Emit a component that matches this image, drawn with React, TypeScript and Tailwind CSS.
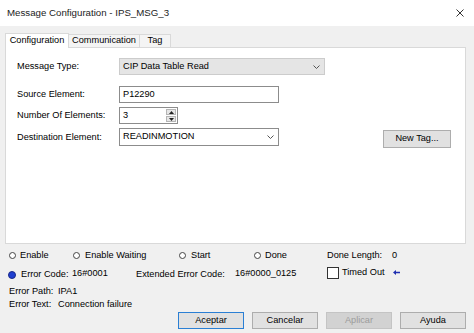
import React from 'react'

const Radio: React.FC<{ on?: boolean }> = ({ on }) =>
  on ? (
    <span className="w-[8px] h-[8px] rounded-full bg-[#1f3fd0] border border-[#1a2a8a] shrink-0" />
  ) : (
    <span className="w-[7px] h-[7px] rounded-full bg-white border border-[#444] shrink-0" />
  )

const Chevron: React.FC = () => (
  <svg width="7" height="4" viewBox="0 0 7 4" className="shrink-0">
    <path d="M0.5 0.5 L3.5 3.5 L6.5 0.5" fill="none" stroke="#555" strokeWidth="1" />
  </svg>
)

const Btn: React.FC<{ label: string; primary?: boolean; disabled?: boolean }> = ({ label, primary, disabled }) => (
  <div
    className={`w-[66px] h-[17px] flex items-center justify-center border ${
      primary
        ? 'border-[#2a7fd4] bg-[#e1e1e1] text-black'
        : disabled
        ? 'border-[#c4c4c4] bg-[#d2d2d2] text-[#9c9c9c]'
        : 'border-[#adadad] bg-[#e1e1e1] text-black'
    }`}
  >
    {label}
  </div>
)

const App: React.FC = () => {
  return (
    <div className="w-[474px] h-[333px] bg-[#f0f0f0] flex flex-col font-['Liberation_Sans',Arial,sans-serif] text-[9.2px] text-black overflow-hidden">
      {/* title bar */}
      <div className="h-[26px] bg-white flex items-center justify-between pl-[7px] pr-[10px] shrink-0">
        <span className="text-[9.7px] text-[#222]">Message Configuration - IPS_MSG_3</span>
        <svg width="8" height="8" viewBox="0 0 8 8">
          <path d="M0.5 0.5 L7.5 7.5 M7.5 0.5 L0.5 7.5" stroke="#333" strokeWidth="1" />
        </svg>
      </div>

      {/* tabs */}
      <div className="pl-[5px] pr-[8px] pt-[7px] shrink-0">
        <div className="flex items-end h-[14px] relative z-10">
          <div className="w-[64px] h-[15px] bg-white border border-b-0 border-[#d9d9d9] flex items-center justify-center mb-[-1px]">
            Configuration
          </div>
          <div className="w-[71px] h-[13px] bg-[#f4f4f4] border border-l-0 border-b-0 border-[#d9d9d9] flex items-center justify-center">
            Communication
          </div>
          <div className="w-[31px] h-[13px] bg-[#f4f4f4] border border-l-0 border-b-0 border-[#d9d9d9] flex items-center justify-center">
            Tag
          </div>
        </div>

        {/* panel */}
        <div className="h-[197px] bg-white border border-[#d9d9d9] pl-[11px] pt-[10px] flex flex-col">
          <div className="flex items-center h-[17px]">
            <span className="w-[102px]">Message Type:</span>
            <div className="w-[206px] h-[17px] bg-[#e5e5e5] border border-[#cccccc] flex items-center justify-between pl-[3px] pr-[4px]">
              <span>CIP Data Table Read</span>
              <Chevron />
            </div>
          </div>

          <div className="flex items-center h-[17px] mt-[11px]">
            <span className="w-[102px]">Source Element:</span>
            <div className="w-[160px] h-[17px] bg-white border border-[#8c8c8c] flex items-center pl-[3px]">P12290</div>
          </div>

          <div className="flex items-center h-[17px] mt-[4px]">
            <span className="w-[102px]">Number Of Elements:</span>
            <div className="w-[59px] h-[17px] bg-white border border-[#8c8c8c] flex items-center justify-between pl-[3px] pr-[1px]">
              <span>3</span>
              <div className="w-[10px] h-[13px] flex flex-col gap-[1px]">
                <div className="flex-1 bg-[#e6e6e6] border border-[#b5b5b5] flex items-center justify-center">
                  <svg width="5" height="3" viewBox="0 0 5 3"><path d="M0 3 L2.5 0 L5 3 Z" fill="#222" /></svg>
                </div>
                <div className="flex-1 bg-[#e6e6e6] border border-[#b5b5b5] flex items-center justify-center">
                  <svg width="5" height="3" viewBox="0 0 5 3"><path d="M0 0 L2.5 3 L5 0 Z" fill="#222" /></svg>
                </div>
              </div>
            </div>
          </div>

          <div className="flex items-center h-[19px] mt-[4px]">
            <span className="w-[102px]">Destination Element:</span>
            <div className="w-[160px] h-[18px] bg-white border border-[#8c8c8c] flex items-center justify-between pl-[3px] pr-[4px] self-start">
              <span>READINMOTION</span>
              <Chevron />
            </div>
            <div className="ml-[104px] w-[68px] h-[18px] mt-[2px] bg-[#e1e1e1] border border-[#adadad] flex items-center justify-center self-start">
              New Tag...
            </div>
          </div>
        </div>
      </div>

      {/* status */}
      <div className="flex items-center h-[13px] mt-[5px] pl-[9px] shrink-0">
        <div className="w-[64px] flex items-center gap-[4px]"><Radio /><span>Enable</span></div>
        <div className="w-[106px] flex items-center gap-[5px]"><Radio /><span>Enable Waiting</span></div>
        <div className="w-[75px] flex items-center gap-[5px]"><Radio /><span>Start</span></div>
        <div className="w-[73px] flex items-center gap-[4px]"><Radio /><span>Done</span></div>
        <span className="w-[65px]">Done Length:</span>
        <span>0</span>
      </div>

      <div className="flex items-center h-[13px] mt-[6px] pl-[8px] shrink-0">
        <div className="w-[64px] flex items-center gap-[5px]"><Radio on /><span>Error Code:</span></div>
        <span className="w-[64px] mt-[-2px]">16#0001</span>
        <span className="w-[99px]">Extended Error Code:</span>
        <span className="w-[92px] mt-[-1px]">16#0000_0125</span>
        <div className="w-[66px] flex items-center gap-[3px] mt-[-3px]">
          <span className="w-[12px] h-[12px] bg-white border border-[#333] shrink-0" />
          <span>Timed Out</span>
        </div>
        <svg width="7" height="5" viewBox="0 0 7 5" className="mt-[-4px]">
          <path d="M0 2.5 L3 0 L3 1.8 L7 1.8 L7 3.2 L3 3.2 L3 5 Z" fill="#1f2fb0" />
        </svg>
      </div>

      <div className="flex items-center h-[12px] mt-[5px] pl-[9px] shrink-0">
        <span className="w-[49px]">Error Path:</span>
        <span>IPA1</span>
      </div>
      <div className="flex items-center h-[12px] mt-[1px] pl-[9px] shrink-0">
        <span className="w-[49px]">Error Text:</span>
        <span>Connection failure</span>
      </div>

      <div className="flex justify-end gap-[8px] pr-[8px] mt-[1px] shrink-0">
        <Btn label="Aceptar" primary />
        <Btn label="Cancelar" />
        <Btn label="Aplicar" disabled />
        <Btn label="Ayuda" />
      </div>
    </div>
  )
}

export default App
